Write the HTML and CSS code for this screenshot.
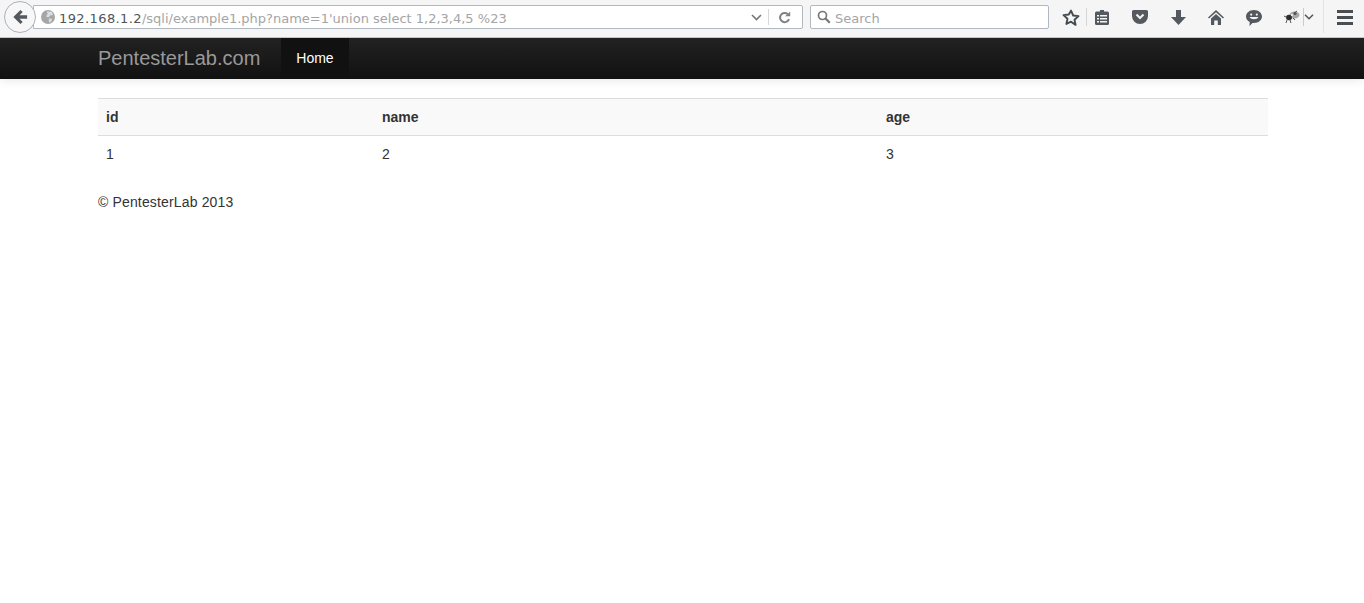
FILE: index.html
```html
<!DOCTYPE html>
<html lang="en">
<head>
<meta charset="utf-8">
<title>PentesterLab.com</title>
<link rel="stylesheet" href="styles.css">
</head>
<body>
<header class="toolbar">
  <div class="back">
    <svg width="16" height="16" viewBox="0 0 18 18"><path class="ic" d="M9.500 1 12 3.500 8.500 7H17v4H8.500l3.500 3.500L9.500 17 1.500 9z"/></svg>
  </div>
  <div class="urlbar">
    <svg class="globe" width="14" height="14" viewBox="0 0 14 14"><circle cx="7" cy="7" r="7" fill="#a4a6a8"/><path d="M6 1.200 11 2l1 3-3 .5-1.500 2L5 6.500 6.500 4zM8 8.500l3 .2-.5 2.500-2 1.500-.8-2z" fill="#dcdddd"/></svg>
    <div class="url"><span class="host">192.168.1.2</span>/sqli/example1.php?name=1'union select 1,2,3,4,5 %23</div>
    <svg class="chev" width="11" height="7" viewBox="0 0 11 7"><path d="M1 1l4.500 4.500L10 1" fill="none" stroke="#777" stroke-width="1.600"/></svg>
    <span class="sep"></span>
    <svg class="reload" width="13" height="13" viewBox="0 0 13 13"><path d="M11 8.200A4.600 4.600 0 1 1 9.600 3" fill="none" stroke="#7b8288" stroke-width="2"/><path d="M7.200 5.300h5V.6z" fill="#7b8288"/></svg>
  </div>
  <div class="search">
    <svg width="14" height="14" viewBox="0 0 14 14"><circle cx="5.500" cy="5.500" r="4" fill="none" stroke="#777" stroke-width="1.700"/><path d="M8.500 8.500l4.300 4.300" stroke="#777" stroke-width="2.200"/></svg>
    <span class="search-text">Search</span>
  </div>
  <div class="tools">
    <svg class="t-star" width="18" height="17" viewBox="0 0 18 17"><path d="M9 1.600l2.200 4.900 5.300.6-4 3.600 1.100 5.200L9 12.700l-4.600 2.200 1.100-5.200-4-3.600 5.300-.6z" fill="none" stroke="#444b50" stroke-width="1.900" stroke-linejoin="round"/></svg>
    <span class="t-sep"></span>
    <svg class="t-list" width="14" height="15" viewBox="0 0 14 15"><path class="ic" d="M5 0h4v1.500h3.500A1.500 1.500 0 0 1 14 3v10.500a1.500 1.500 0 0 1-1.500 1.500h-11A1.500 1.500 0 0 1 0 13.500V3a1.500 1.500 0 0 1 1.500-1.500H5z"/><path d="M2 5h2v1.500H2zM5 5h7v1.500H5zM2 8h2v1.500H2zM5 8h7v1.500H5zM2 11h2v1.500H2zM5 11h7v1.500H5z" fill="#f5f5f5"/></svg>
    <svg class="t-pocket" width="16" height="14" viewBox="0 0 16 14"><path class="ic" d="M1.500 0h13A1.500 1.500 0 0 1 16 1.500V6a8 8 0 0 1-16 0V1.500A1.500 1.500 0 0 1 1.500 0z"/><path d="M4.500 4.500 8 8l3.500-3.500" fill="none" stroke="#f0f0f0" stroke-width="2.200"/></svg>
    <svg class="t-down" width="15" height="15" viewBox="0 0 15 15"><path class="ic" d="M5 0h5v7h5l-7.500 8L0 7h5z"/></svg>
    <svg class="t-home" width="16" height="15" viewBox="0 0 16 15"><path class="ic" d="M8 0l8 7.500-1 1L8 2.200 1 8.500l-1-1zM3 8.500l5-4.500 5 4.500V15h-3.200v-4.500H6.200V15H3z"/></svg>
    <svg class="t-smile" width="16" height="16" viewBox="0 0 16 16"><path class="ic" d="M8 0c4.400 0 8 2.900 8 6.500S12.400 13 8 13c-.5 0-1 0-1.500-.1L3.500 16l.2-4.100C1.500 10.800 0 8.800 0 6.500 0 2.900 3.600 0 8 0z"/><circle cx="5.200" cy="4.600" r="1.100" fill="#f5f5f5"/><circle cx="10.800" cy="4.600" r="1.100" fill="#f5f5f5"/><path d="M3.500 7c1.500 3 7.500 3 9 0z" fill="#f5f5f5"/></svg>
    <svg class="t-bug" width="16" height="14" viewBox="0 0 16 14"><ellipse cx="10.500" cy="5" rx="5" ry="3.500" fill="#a8a8a8"/><ellipse cx="5" cy="7.500" rx="3" ry="2.800" fill="#2e2e2e"/><circle cx="11" cy="3.500" r="1.600" fill="#555"/><circle cx="8" cy="5" r="1.200" fill="#e8e8e8"/><path d="M0 6l3 1.500M3 10l-1 3M6 10l1 3M9 8l2 2M13 1l-3 2" stroke="#555" fill="none"/></svg>
    <span class="t-sep2"></span>
    <svg class="t-chev" width="10" height="6" viewBox="0 0 10 6"><path d="M1 .8l4 4 4-4" fill="none" stroke="#555" stroke-width="1.500"/></svg>
    <span class="t-sep3"></span>
    <div class="t-menu"><i></i><i></i><i></i></div>
  </div>
</header>
<nav class="navbar">
  <div class="container nav-inner">
    <a class="brand">PentesterLab.com</a>
    <a class="nav-item">Home</a>
  </div>
</nav>
<main class="container">
  <table class="table">
    <thead><tr><th class="c1">id</th><th class="c2">name</th><th>age</th></tr></thead>
    <tbody><tr><td>1</td><td>2</td><td>3</td></tr></tbody>
  </table>
  <footer class="footer">© PentesterLab 2013</footer>
</main>
</body>
</html>
```
FILE: styles.css
```css
* { box-sizing: border-box; }
html, body { margin: 0; padding: 0; background: #fff; }
body { font-family: "Liberation Sans", Arial, sans-serif; font-size: 14px; line-height: 20px; color: #333; overflow: hidden; height: 603px; }
.ic { fill: #53595e; }

.toolbar { height: 38px; background: #f5f5f5; border-bottom: 1px solid #c4c6c8; display: flex; align-items: flex-start; position: relative; }
.back { position: absolute; left: 4px; top: 1px; width: 32px; height: 32px; border-radius: 50%; border: 1px solid #aab2bd; background: #f7f7f7; display: flex; align-items: center; justify-content: center; z-index: 1; }
.urlbar { margin-left: 33px; margin-top: 5px; width: 770px; height: 24px; background: #fff; border: 1px solid #b0b8c2; border-radius: 0 2px 2px 0; display: flex; align-items: center; padding-left: 7px; }
.globe { flex: none; }
.url { margin-left: 4px; flex: 1; font-family: "DejaVu Sans", sans-serif; font-size: 13px; color: #a3a5a7; white-space: nowrap; line-height: 22px; padding-top: 3px; }
.host { color: #4f5558; letter-spacing: .4px; }
.chev { flex: none; margin-right: 6px; }
.sep { flex: none; width: 1px; height: 16px; background: #d5d7d9; margin-right: 9px; }
.reload { flex: none; margin-right: 11px; }
.search { margin-left: 7px; margin-top: 5px; width: 239px; height: 24px; background: #fff; border: 1px solid #b0b8c2; border-radius: 2px; display: flex; align-items: center; padding-left: 6px; gap: 4px; font-family: "DejaVu Sans", sans-serif; font-size: 13px; color: #a3a5a7; }
.search-text { padding-top: 3px; }
.tools { position: relative; flex: 1; height: 37px; }
.tools svg, .tools span, .t-menu { position: absolute; }
.t-star { left: 13px; top: 9px; }
.t-sep { left: 37px; top: 8px; width: 1px; height: 18px; background: #d3d5d7; }
.t-list { left: 46px; top: 10px; }
.t-pocket { left: 83px; top: 10px; }
.t-down { left: 122px; top: 10px; }
.t-home { left: 159px; top: 10px; }
.t-smile { left: 197px; top: 10px; }
.t-bug { left: 235px; top: 10px; }
.t-sep2 { left: 254px; top: 8px; width: 1px; height: 18px; background: #c9cbcd; }
.t-chev { left: 255px; top: 14px; }
.t-sep3 { left: 274px; top: 0; width: 1px; height: 33px; background: #e2e3e4; }
.t-menu { left: 288px; top: 10px; width: 16px; display: flex; flex-direction: column; gap: 3px; }
.t-menu i { display: block; height: 3px; background: #484e52; }

.navbar { height: 41px; background: linear-gradient(#222, #111); box-shadow: 0 1px 10px rgba(0,0,0,.1); }
.container { width: 1170px; margin-left: 98px; }
.nav-inner { display: flex; height: 41px; }
.brand { font-size: 20px; line-height: 40px; color: #999; width: 183px; }
.nav-item { width: 68px; background: #111; color: #fff; text-align: center; line-height: 40px; font-size: 14px; }

.table { width: 1170px; border-collapse: collapse; table-layout: fixed; margin-top: 19px; }
.table th, .table td { padding: 8px; text-align: left; line-height: 20px; vertical-align: top; font-size: 14px; }
.table th { background: #f9f9f9; border-top: 1px solid #ddd; border-bottom: 1px solid #ddd; font-weight: bold; }
.c1 { width: 276px; }
.c2 { width: 504px; }
.footer { margin-top: 20px; letter-spacing: .15px; }
```
